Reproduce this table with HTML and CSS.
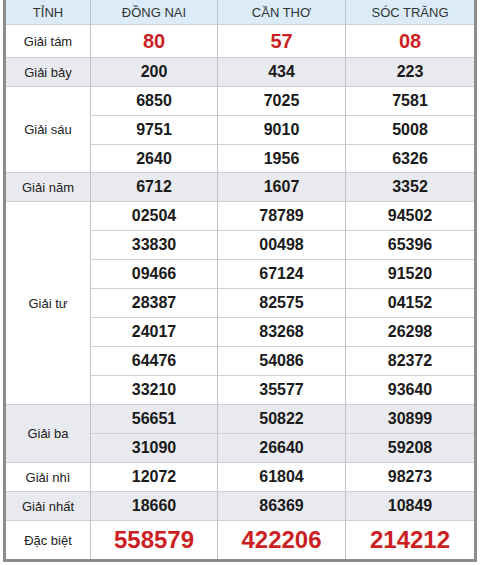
FILE: index.html
```html
<!DOCTYPE html>
<html lang="vi">
<head>
<meta charset="utf-8">
<title>Kết quả xổ số</title>
<link rel="stylesheet" href="styles.css">
</head>
<body>
<div class="frame">
<table class="kq">
  <colgroup>
    <col class="c-label"><col class="c-a"><col class="c-b"><col class="c-c">
  </colgroup>
  <thead>
    <tr class="r-head"><th>TỈNH</th><th>ĐỒNG NAI</th><th>CẦN THƠ</th><th>SÓC TRĂNG</th></tr>
  </thead>
  <tbody>
    <tr class="r-tam"><td class="lbl">Giải tám</td><td class="big">80</td><td class="big">57</td><td class="big">08</td></tr>
    <tr class="alt"><td class="lbl">Giải bảy</td><td>200</td><td>434</td><td>223</td></tr>
    <tr><td class="lbl" rowspan="3">Giải sáu</td><td>6850</td><td>7025</td><td>7581</td></tr>
    <tr><td>9751</td><td>9010</td><td>5008</td></tr>
    <tr class="r-short"><td>2640</td><td>1956</td><td>6326</td></tr>
    <tr class="alt"><td class="lbl">Giải năm</td><td>6712</td><td>1607</td><td>3352</td></tr>
    <tr><td class="lbl" rowspan="7">Giải tư</td><td>02504</td><td>78789</td><td>94502</td></tr>
    <tr><td>33830</td><td>00498</td><td>65396</td></tr>
    <tr><td>09466</td><td>67124</td><td>91520</td></tr>
    <tr><td>28387</td><td>82575</td><td>04152</td></tr>
    <tr><td>24017</td><td>83268</td><td>26298</td></tr>
    <tr><td>64476</td><td>54086</td><td>82372</td></tr>
    <tr><td>33210</td><td>35577</td><td>93640</td></tr>
    <tr class="alt"><td class="lbl" rowspan="2">Giải ba</td><td>56651</td><td>50822</td><td>30899</td></tr>
    <tr class="alt"><td>31090</td><td>26640</td><td>59208</td></tr>
    <tr><td class="lbl">Giải nhì</td><td>12072</td><td>61804</td><td>98273</td></tr>
    <tr class="alt"><td class="lbl">Giải nhất</td><td>18660</td><td>86369</td><td>10849</td></tr>
    <tr class="r-db"><td class="lbl">Đặc biệt</td><td class="huge">558579</td><td class="huge">422206</td><td class="huge">214212</td></tr>
  </tbody>
</table>
</div>
</body>
</html>
```
FILE: styles.css
```css
html, body {
  margin: 0;
  padding: 0;
  background: #ffffff;
}
.frame {
  margin-left: 3px;
  width: 468px;
  border-left: 3px solid #8c8c8c;
  border-right: 3px solid #8c8c8c;
  border-bottom: 3px solid #8c8c8c;
}
.kq {
  width: 468px;
  table-layout: fixed;
  border-collapse: separate;
  border-spacing: 0;
  font-family: Arial, "Liberation Sans", sans-serif;
  color: #1a1a1a;
}
.c-label { width: 85px; }
.c-a { width: 127px; }
.c-b { width: 128px; }
.c-c { width: 128px; }
.kq th, .kq td {
  padding: 0;
  text-align: center;
  vertical-align: middle;
  border-bottom: 1px solid #cfd0d6;
  border-right: 1px solid #c2c3c9;
}
.kq th:last-child, .kq td:last-child { border-right: none; }
.kq tr { height: 29px; }
.kq td {
  font-size: 16px;
  font-weight: bold;
}
.kq td.lbl {
  font-size: 13px;
  font-weight: normal;
  color: #222;
}
.r-head { height: 25px !important; }
.r-head th {
  background: #dbecf8;
  font-size: 13px;
  font-weight: normal;
  color: #333;
}
.kq tr.r-tam { height: 33px; }
.kq tr.r-short { height: 28px; }
.kq tr.r-db { height: 38px; }
.kq tr.r-db td { border-bottom: none; }
.alt td { background: #e9eaef; }
.kq td.big {
  font-size: 20px;
  color: #cc1f24;
}
.kq td.huge {
  font-size: 24px;
  color: #cc1f24;
}
```
